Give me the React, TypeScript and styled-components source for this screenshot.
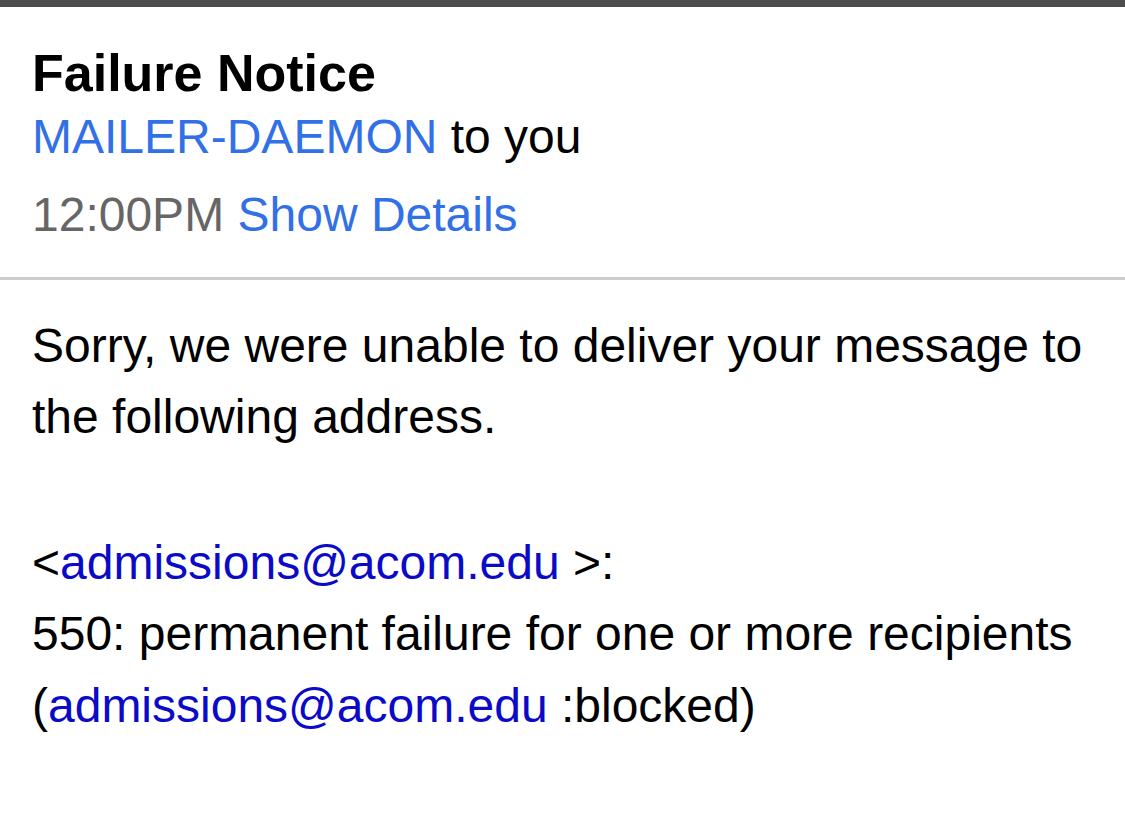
import React from "react";
import styled, { createGlobalStyle } from "styled-components";

const Global = createGlobalStyle`
  html, body { margin: 0; padding: 0; background: #ffffff; }
  body { font-family: "Liberation Sans", Arial, Helvetica, sans-serif; color: #000; }
`;

const Page = styled.div`
  width: 1125px;
  min-height: 818px;
  background: #fff;
  border-top: 7px solid #4d4d4d;
`;

const Header = styled.header`
  padding: 40px 32px 0 32px;
  height: 230px;
  border-bottom: 3px solid #cccccc;
  box-sizing: content-box;
`;

const Title = styled.h1`
  margin: 0;
  font-size: 52px;
  font-weight: bold;
  line-height: 52px;
`;

const MetaLine = styled.div<{ $gap: number }>`
  font-size: 48px;
  line-height: 52px;
  margin-top: ${(p) => p.$gap}px;
`;

const SenderLink = styled.span`
  color: #3170e6;
`;

const Time = styled.span`
  color: #666666;
`;

const Body = styled.div`
  padding: 30px 32px 0 32px;
  font-size: 48px;
  line-height: 71.4px;
`;

const Para = styled.p`
  margin: 0 0 74px 0;
`;

const Mail = styled.span`
  color: #0a0ac8;
`;

export default function App() {
  return (
    <>
      <Global />
      <Page>
        <Header>
          <Title>Failure Notice</Title>
          <MetaLine $gap={12}>
            <SenderLink>MAILER-DAEMON</SenderLink> to you
          </MetaLine>
          <MetaLine $gap={26}>
            <Time>12:00PM</Time> <SenderLink>Show Details</SenderLink>
          </MetaLine>
        </Header>
        <Body>
          <Para>
            Sorry, we were unable to deliver your message to
            <br />
            the following address.
          </Para>
          <Para>
            &lt;<Mail>admissions@acom.edu</Mail> &gt;:
            <br />
            550: permanent failure for one or more recipients
            <br />(<Mail>admissions@acom.edu</Mail> :blocked)
          </Para>
        </Body>
      </Page>
    </>
  );
}
